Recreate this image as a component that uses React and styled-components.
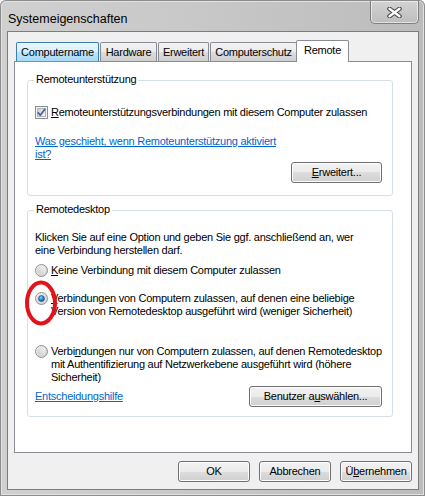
import React, { useId } from "react";
import styled, { createGlobalStyle, css } from "styled-components";

const GlobalStyle = createGlobalStyle`
  html, body { margin: 0; padding: 0; background: #ffffff; }
  body {
    font-family: "Liberation Sans", Arial, sans-serif;
    font-size: 11px;
    line-height: 13px;
    letter-spacing: -0.25px;
    color: #000000;
  }
  * { box-sizing: border-box; }
`;

const Window = styled.div`
  position: relative;
  width: 425px;
  height: 496px;
  display: flex;
  flex-direction: column;
  padding: 0 6px 6px 7px;
  background: linear-gradient(90deg, #d0d0d0 0%, #c8c8c8 45%, #bcbcbc 100%);
  border-radius: 6px 6px 0 0;
  box-shadow: inset 0 0 0 1px #8c8c8c, inset 0 0 0 2px #e2e2e2;
`;

const TitleBar = styled.div`
  height: 31px;
  flex: none;
  display: flex;
  justify-content: space-between;
  align-items: flex-start;
`;

const Title = styled.div`
  padding: 12px 0 0 1px;
  font-size: 12.5px;
  line-height: 15px;
  letter-spacing: 0;
  color: #000000;
`;

const CloseButton = styled.div`
  width: 49px;
  height: 23px;
  margin-top: 1px;
  display: flex;
  align-items: center;
  justify-content: center;
  border: 1px solid #7e7e7e;
  border-top: none;
  border-radius: 0 0 5px 5px;
  background: linear-gradient(180deg, #d2d2d2 0%, #c6c6c6 60%, #bdbdbd 100%);
  box-shadow: inset 0 0 0 1px rgba(255, 255, 255, 0.55);
`;

const Client = styled.div`
  flex: 1;
  display: flex;
  flex-direction: column;
  border: 1px solid #7c7c7c;
  background: #f0f0f0;
  padding: 8px 6px 7px 6px;
`;

const TabRow = styled.div`
  height: 21px;
  display: flex;
  align-items: flex-end;
  gap: 1px;
  padding-left: 2px;
  position: relative;
  z-index: 1;
`;

const tabStates = {
  normal: css`
    height: 19px;
    border-color: #898c95;
    background: linear-gradient(180deg, #f2f2f2 0%, #ebebeb 50%, #dddddd 50%, #cfcfcf 100%);
  `,
  hot: css`
    height: 19px;
    border-color: #3c7fb1;
    background: linear-gradient(180deg, #eaf6fd 0%, #d9f0fc 50%, #bee6fd 50%, #a7d9f5 100%);
  `,
  selected: css`
    height: 22px;
    margin-bottom: -1px;
    margin-left: -2px;
    padding-bottom: 2px;
    border-color: #898c95;
    background: #ffffff;
  `,
};

const Tab = styled.div`
  width: ${(p) => p.$width}px;
  display: flex;
  align-items: center;
  justify-content: center;
  border: 1px solid;
  border-bottom: none;
  border-radius: 2px 2px 0 0;
  white-space: nowrap;
  ${(p) => tabStates[p.$state || "normal"]}
`;

const Panel = styled.div`
  height: 392px;
  flex: none;
  display: flex;
  flex-direction: column;
  background: #ffffff;
  border: 1px solid #898c95;
  padding: 18px 18px 0 12px;
`;

const GroupBox = styled.div`
  position: relative;
  display: flex;
  flex-direction: column;
  border: 1px solid #d5dfe5;
  border-radius: 3px;
  padding: ${(p) => p.$padTop}px 10px ${(p) => p.$padBottom}px 7px;
  margin-top: ${(p) => p.$gap || 0}px;
`;

const GroupLabel = styled.span`
  position: absolute;
  top: -8px;
  left: 6px;
  padding: 0 2px;
  background: #ffffff;
  white-space: nowrap;
`;

const OptionRow = styled.div`
  display: flex;
  align-items: flex-start;
  gap: 3px;
  margin-top: ${(p) => p.$gap || 0}px;
`;

const OptionText = styled.div`
  white-space: nowrap;
`;

const Paragraph = styled.div`
  white-space: nowrap;
  margin-top: ${(p) => p.$gap || 0}px;
`;

const Link = styled.a`
  color: #0066cc;
  text-decoration: underline;
  cursor: pointer;
  white-space: nowrap;
`;

const LinkBlock = styled.div`
  margin-top: ${(p) => p.$gap || 0}px;
`;

const Key = styled.span`
  text-decoration: underline;
`;

const ButtonRow = styled.div`
  display: flex;
  justify-content: ${(p) => p.$justify || "flex-end"};
  align-items: center;
  gap: ${(p) => p.$spacing || 0}px;
  margin-top: ${(p) => p.$gap || 0}px;
`;

const Button = styled.div`
  width: ${(p) => p.$width}px;
  height: 21px;
  display: flex;
  align-items: center;
  justify-content: center;
  border: 1px solid #707070;
  border-radius: 3px;
  background: linear-gradient(180deg, #f2f2f2 0%, #ebebeb 50%, #dddddd 50%, #cfcfcf 100%);
  box-shadow: inset 0 0 0 1px #fcfcfc;
  white-space: nowrap;
  padding-bottom: 1px;
`;

const Annotation = styled.svg`
  position: absolute;
  left: 25px;
  top: 280px;
  pointer-events: none;
`;

const Glyph = styled.svg`
  flex: none;
  display: block;
`;

function CheckBox() {
  const id = useId();
  return (
    <Glyph width="13" height="13" viewBox="0 0 13 13">
      <defs>
        <linearGradient id={id} x1="0" y1="0" x2="1" y2="1">
          <stop offset="0" stopColor="#cbcfd5" />
          <stop offset="1" stopColor="#f7f7f7" />
        </linearGradient>
      </defs>
      <rect x="0.5" y="0.5" width="12" height="12" fill="#f4f4f4" stroke="#8e8f8f" />
      <rect x="2.5" y="2.5" width="8" height="8" fill={`url(#${id})`} stroke="#b2b6bc" />
      <path d="M2.8 6.4 L5.3 9.2 L10.2 2.8" fill="none" stroke="#4a5f97" strokeWidth="1.7" strokeLinejoin="round" />
    </Glyph>
  );
}

function Radio({ checked }) {
  const id = useId();
  return (
    <Glyph width="13" height="13" viewBox="0 0 13 13">
      <defs>
        <linearGradient id={`${id}o`} x1="0" y1="0" x2="1" y2="1">
          <stop offset="0" stopColor="#f6f6f6" />
          <stop offset="1" stopColor="#c9c9c9" />
        </linearGradient>
        <linearGradient id={`${id}i`} x1="0" y1="1" x2="1" y2="0">
          <stop offset="0" stopColor="#cacaca" />
          <stop offset="1" stopColor="#f4f4f4" />
        </linearGradient>
        <radialGradient id={`${id}d`} cx="0.4" cy="0.35" r="0.7">
          <stop offset="0" stopColor="#8fd1ff" />
          <stop offset="0.5" stopColor="#2a8ad6" />
          <stop offset="1" stopColor="#0d4a8a" />
        </radialGradient>
      </defs>
      <circle cx="6.5" cy="6.5" r="6" fill={`url(#${id}o)`} stroke="#929292" />
      <circle cx="6.5" cy="6.5" r="4.2" fill={`url(#${id}i)`} />
      {checked && <circle cx="6.5" cy="6.5" r="3" fill={`url(#${id}d)`} stroke="#1b4f86" strokeWidth="0.6" />}
    </Glyph>
  );
}

function CloseGlyph() {
  return (
    <svg width="15" height="11" viewBox="0 0 15 11">
      <path d="M2.5 1.8 L12.5 9.2 M12.5 1.8 L2.5 9.2" stroke="#3b3f45" strokeWidth="4.4" strokeLinecap="round" />
      <path d="M2.5 1.8 L12.5 9.2 M12.5 1.8 L2.5 9.2" stroke="#ffffff" strokeWidth="2.4" strokeLinecap="round" />
    </svg>
  );
}

export default function App() {
  return (
    <>
      <GlobalStyle />
      <Window>
        <TitleBar>
          <Title>Systemeigenschaften</Title>
          <CloseButton>
            <CloseGlyph />
          </CloseButton>
        </TitleBar>
        <Client>
          <TabRow>
            <Tab $width={83} $state="hot">Computername</Tab>
            <Tab $width={57}>Hardware</Tab>
            <Tab $width={51}>Erweitert</Tab>
            <Tab $width={87}>Computerschutz</Tab>
            <Tab $width={53} $state="selected">Remote</Tab>
          </TabRow>
          <Panel>
            <GroupBox $padTop={25} $padBottom={12}>
              <GroupLabel>Remoteunterstützung</GroupLabel>
              <OptionRow>
                <CheckBox />
                <OptionText>
                  <Key>R</Key>emoteunterstützungsverbindungen mit diesem Computer zulassen
                </OptionText>
              </OptionRow>
              <LinkBlock $gap={16}>
                <Link>
                  Was geschieht, wenn Remoteunterstützung aktiviert
                  <br />
                  ist?
                </Link>
              </LinkBlock>
              <ButtonRow $gap={1}>
                <Button $width={91}>
                  <Key>E</Key>rweitert...
                </Button>
              </ButtonRow>
            </GroupBox>

            <GroupBox $padTop={20} $padBottom={9} $gap={14}>
              <GroupLabel>Remotedesktop</GroupLabel>
              <Paragraph>
                Klicken Sie auf eine Option und geben Sie ggf. anschließend an, wer
                <br />
                eine Verbindung herstellen darf.
              </Paragraph>
              <OptionRow $gap={7}>
                <Radio />
                <OptionText>
                  <Key>K</Key>eine Verbindung mit diesem Computer zulassen
                </OptionText>
              </OptionRow>
              <OptionRow $gap={15}>
                <Radio checked />
                <OptionText>
                  <Key>V</Key>erbindungen von Computern zulassen, auf denen eine beliebige
                  <br />
                  Version von Remotedesktop ausgeführt wird (weniger Sicherheit)
                </OptionText>
              </OptionRow>
              <OptionRow $gap={27}>
                <Radio />
                <OptionText>
                  Verbi<Key>n</Key>dungen nur von Computern zulassen, auf denen Remotedesktop
                  <br />
                  mit Authentifizierung auf Netzwerkebene ausgeführt wird (höhere
                  <br />
                  Sicherheit)
                </OptionText>
              </OptionRow>
              <ButtonRow $justify="space-between" $gap={2}>
                <Link>Entscheidungshilfe</Link>
                <Button $width={133}>
                  Benutzer a<Key>u</Key>swählen...
                </Button>
              </ButtonRow>
            </GroupBox>
          </Panel>
          <ButtonRow $gap={8} $spacing={9}>
            <Button $width={72}>OK</Button>
            <Button $width={72}>Abbrechen</Button>
            <Button $width={72}>
              Ü<Key>b</Key>ernehmen
            </Button>
          </ButtonRow>
        </Client>
        <Annotation width="32" height="46" viewBox="0 0 32 46">
          <ellipse cx="16" cy="23" rx="14" ry="20.5" fill="none" stroke="#e3131b" strokeWidth="4" />
        </Annotation>
      </Window>
    </>
  );
}
